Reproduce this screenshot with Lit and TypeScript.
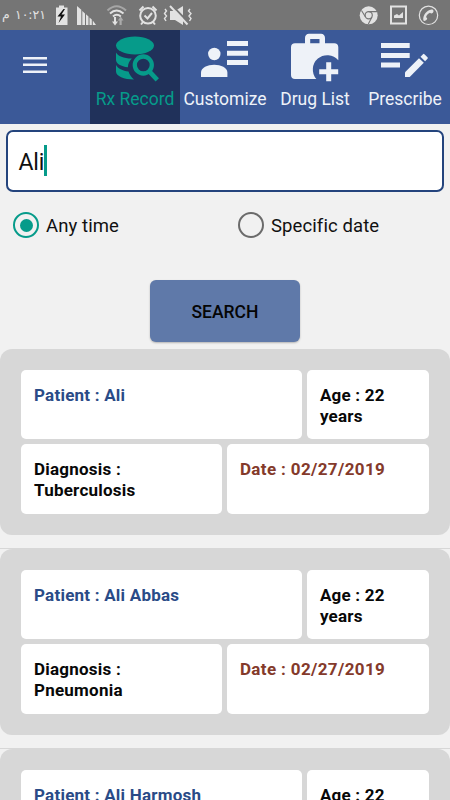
import { LitElement, html, svg, css } from "lit";
import { customElement, property } from "lit/decorators.js";

interface RxRecord {
  patient: string;
  age: string;
  diagnosis: string;
  date: string;
}

const RECORDS: RxRecord[] = [
  { patient: "Ali", age: "22 years", diagnosis: "Tuberculosis", date: "02/27/2019" },
  { patient: "Ali Abbas", age: "22 years", diagnosis: "Pneumonia", date: "02/27/2019" },
  { patient: "Ali Harmosh", age: "22 years", diagnosis: "", date: "" },
];

const recordIcon = svg`
  <ellipse cx="45" cy="15.500" rx="19" ry="9"/>
  <path d="M26 22.500C28 26 33.500 28.300 41.800 28.600C39.300 31 38 34 37.900 37.300C31 36.500 26 33.500 26 30Z"/>
  <path d="M26 35C28 38.500 32.500 40.800 38.500 41.500C39.500 44.700 41.300 47 44 49.500C34 49.500 26 46 26 41.500Z"/>
  <circle cx="53.300" cy="35" r="8.500" fill="none" stroke="currentColor" stroke-width="4.300"/>
  <path d="M59.500 41.700L67.300 49.800" fill="none" stroke="currentColor" stroke-width="4.600"/>`;

const customizeIcon = svg`
  <circle cx="34.300" cy="24" r="6.200"/>
  <path d="M21 47V42.500C21 37.500 27.500 34.700 34.200 34.700S47.400 37.500 47.400 42.500V47Z"/>
  <path d="M47 11H68V16H47ZM47 20.700H68V25.700H47ZM47 30H68V35H47Z"/>`;

const drugIcon = svg`
  <path fill-rule="evenodd" d="M25 13.300H35V8C35 5.500 36.500 3.800 39 3.800H51C53.500 3.800 55 5.500 55 8V13.300H64.300C66.800 13.300 68.300 14.800 68.300 17.300V30.200A13.800 13.800 0 0 0 46.300 49H25C22.500 49 21 47.500 21 45V17.300C21 14.800 22.500 13.300 25 13.300ZM40.200 9V13.300H49.500V9Z"/>
  <path d="M56.200 32.300H61.200V39.300H68.200V44.200H61.200V51.200H56.200V44.200H49.200V39.300H56.200Z"/>`;

const prescribeIcon = svg`
  <path d="M21 13H49.700V18H21ZM21 23H49.700V28H21ZM21 32.500H40V37.500H21Z"/>
  <path d="M45 47V42.300L59 28.200L63.800 32.800L49.700 47Z"/>
  <path d="M60.500 26.700L63 24.200Q63.700 23.500 64.400 24.200L67.500 27.300Q68.200 28 67.500 28.700L65.100 31.200Z"/>`;

@customElement("status-bar")
export class StatusBar extends LitElement {
  static styles = css`
    :host {
      display: flex;
      justify-content: space-between;
      height: 30px;
      background: #757575;
      color: #e2e2e2;
    }
    .left, .right { display: flex; align-items: center; }
    .time {
      width: 46px;
      font: 12.500px/28px "DejaVu Sans", sans-serif;
      direction: rtl;
      text-align: right;
      white-space: nowrap;
      display: flex;
      justify-content: space-between;
      box-sizing: border-box;
      padding-left: 2px;
    }
    svg { display: block; }
  `;
  render() {
    return html`
      <div class="left">
        <span class="time"><span>١٠:٢١</span><span>م</span></span>
        <svg width="154" height="30" viewBox="46 0 154 30" fill="currentColor">
          <path d="M56 7.500H59V5.500H64V7.500H67.500V25H56Z"/>
          <path d="M63.500 9L57.500 16.500H61L58.500 23L65 14.500H61.500L65 9Z" fill="#111"/>
          <path d="M77 6L81.300 9.800V25H77ZM82.300 11L85 13.400V25H82.300ZM86 14.300L88.500 16.500V25H86ZM89.500 17.500L91.800 19.600V25H89.500ZM92.800 20.500L96 25H92.800Z"/>
          <g fill="none" stroke="currentColor" stroke-width="2">
            <path d="M107.500 10.500Q116.500 2 126 10.500" opacity=".45"/>
            <path d="M110 13.500Q116.500 7.500 123.500 13.500M113 16.500Q116.800 13 120.800 16.500"/>
          </g>
          <path d="M114 17H116V21.500H118L115 25.500L112 21.500H114Z"/>
          <path d="M119.500 25V20.500H117.800L120.700 16.500L123.500 20.500H121.700V25Z" opacity=".5"/>
          <g fill="none" stroke="currentColor" stroke-width="2">
            <circle cx="148" cy="15.800" r="7.800"/>
            <path d="M139.500 10.500L143.500 6.500M156.500 10.500L152.500 6.500M144.500 15.500L147.500 18.500L152 13M143 22L141 24.500M153 22L155 24.500"/>
          </g>
          <path d="M170 11H175L183 6V25L175 20H170Z"/>
          <path d="M171.500 5L188.500 22.500" stroke="#757575" stroke-width="2"/>
          <path d="M170 6L187.500 24.500" stroke="currentColor" stroke-width="2"/>
          <path d="M165 9L166.500 11L164.500 13.500L166.500 16L164.500 18.500L166 21M190 9L188.500 11L191 13.500L189 16L191 18.500L189.500 21" fill="none" stroke="currentColor" stroke-width="1.400"/>
        </svg>
      </div>
      <div class="right">
        <svg width="100" height="30" viewBox="350 0 100 30" fill="none" stroke="currentColor">
          <circle cx="368.700" cy="15.300" r="9" fill="currentColor" stroke="none"/>
          <circle cx="368.700" cy="15.300" r="3.600" stroke="#757575" stroke-width="1.200"/>
          <path d="M368.700 11.600H377M365.500 17L361.500 10.500M372 17L368.300 24" stroke="#757575" stroke-width="1.100"/>
          <path d="M391 6.500H406V23.500H391Z" stroke-width="2"/>
          <path d="M394 18V15.500L397 14L399 15.500L403 12V18Z" fill="currentColor" stroke="none"/>
          <circle cx="428.500" cy="15.300" r="9.200" stroke-width="1.200"/>
          <path d="M431.500 9.500C426.500 10.500 422.800 15 423.300 20.300C424 21.500 425.500 21.200 427 19.300C427.500 18.500 426.800 17.700 426 17.300C426.500 15 428 13.500 430 12.700C430.700 13.600 431.800 13.700 432.600 13C434.200 11.500 433.800 9.500 431.500 9.500Z" fill="currentColor" stroke="none"/>
        </svg>
      </div>`;
  }
}

@customElement("nav-bar")
export class NavBar extends LitElement {
  static styles = css`
    :host {
      display: grid;
      grid-template-columns: repeat(5, 90px);
      height: 93.500px;
      background: #3b5998;
      color: #eef2f8;
    }
    .tab { display: flex; flex-direction: column; align-items: center; }
    .active { background: #20315a; color: #069b8a; }
    .label { font-size: 17.500px; line-height: 24px; margin-top: 2px; white-space: nowrap; }
    .menu { padding-top: 27px; padding-right: 20px; }
    svg { display: block; fill: currentColor; }
  `;
  render() {
    const tab = (label: string, icon: unknown, active = false) => html`
      <div class="tab ${active ? "active" : ""}">
        <svg width="90" height="55" viewBox="0 0 90 55">${icon}</svg>
        <span class="label">${label}</span>
      </div>`;
    return html`
      <div class="tab menu">
        <svg width="24" height="18" viewBox="0 0 24 18">
          <path d="M0 0H24V2.500H0ZM0 6.600H24V9.100H0ZM0 13.500H24V16H0Z"/>
        </svg>
      </div>
      ${tab("Rx Record", recordIcon, true)}
      ${tab("Customize", customizeIcon)}
      ${tab("Drug List", drugIcon)}
      ${tab("Prescribe", prescribeIcon)}`;
  }
}

@customElement("record-card")
export class RecordCard extends LitElement {
  @property({ attribute: false }) record!: RxRecord;
  static styles = css`
    :host {
      display: flex;
      flex-direction: column;
      gap: 5px;
      box-sizing: border-box;
      height: 186px;
      padding: 21px 21.500px 21px 21px;
      border-radius: 12px;
      background: #d7d7d7;
    }
    .row { display: flex; gap: 5px; }
    .cell {
      box-sizing: border-box;
      height: 69.400px;
      padding: 14.500px 13px 0;
      border-radius: 5px;
      background: #fff;
      color: #080808;
      font-size: 17px;
      font-weight: 700;
      line-height: 21px;
      letter-spacing: 0.230px;
      flex: 1;
    }
    .patient { flex: 0 0 281.400px; color: #2a4b87; }
    .diagnosis { flex: 0 0 201.400px; padding-right: 60px; }
    .age { padding-right: 25px; padding-left: 12.500px; }
    .date { color: #843a2b; letter-spacing: 0.370px; padding-left: 12.500px; }
  `;
  render() {
    const r = this.record;
    return html`
      <div class="row">
        <div class="cell patient">${`Patient : ${r.patient}`}</div>
        <div class="cell age">${`Age : ${r.age}`}</div>
      </div>
      ${r.date
        ? html`<div class="row">
            <div class="cell diagnosis">${`Diagnosis : ${r.diagnosis}`}</div>
            <div class="cell date">${`Date : ${r.date}`}</div>
          </div>`
        : ""}`;
  }
}

@customElement("app-root")
export class AppRoot extends LitElement {
  static styles = css`
    :host {
      display: flex;
      flex-direction: column;
      width: 450px;
      height: 800px;
      overflow: hidden;
      background: #f1f1f1;
      color: #101010;
      font-family: Roboto, sans-serif;
    }
    status-bar, nav-bar, .field, .choices, .search { flex-shrink: 0; }
    .field {
      display: flex;
      align-items: center;
      box-sizing: border-box;
      height: 62px;
      margin: 6.500px 6.500px 0 6px;
      padding: 0 10.500px;
      border: 2px solid #24447d;
      border-radius: 7px;
      background: #fff;
      font-size: 23px;
    }
    .field span:first-child { padding-top: 2px; letter-spacing: -0.200px; }
    .caret { width: 2.500px; height: 31px; background: #069b8a; margin-bottom: 1px; }
    .choices { display: grid; grid-template-columns: 1fr 1fr; margin-top: 20px; }
    .choice { display: flex; align-items: center; gap: 7px; height: 26px; padding-left: 13px; font-size: 18.500px; letter-spacing: 0.100px; }
    .choice > span:last-child { padding-top: 1px; }
    .radio {
      display: grid;
      place-items: center;
      box-sizing: border-box;
      width: 26px;
      height: 26px;
      border: 2.500px solid #6b6b6b;
      border-radius: 50%;
    }
    .on { border-color: #069b8a; }
    .on::after { content: ""; width: 13px; height: 13px; border-radius: 50%; background: #069b8a; }
    .search {
      align-self: center;
      width: 150px;
      height: 62px;
      margin-top: 42px;
      padding: 2px 0 0;
      border: 0;
      border-radius: 6px;
      background: #5f79a9;
      box-shadow: 0 1px 2px rgba(0, 0, 0, 0.250);
      color: #050505;
      font: 500 17.500px Roboto, sans-serif;
    }
    .list { margin-top: 7px; }
    .item { height: 199px; border-bottom: 1px solid #d7d7d7; }
  `;
  render() {
    return html`
      <status-bar></status-bar>
      <nav-bar></nav-bar>
      <div class="field"><span>Ali</span><span class="caret"></span></div>
      <div class="choices">
        <div class="choice"><span class="radio on"></span><span>Any time</span></div>
        <div class="choice"><span class="radio"></span><span>Specific date</span></div>
      </div>
      <button class="search">SEARCH</button>
      <div class="list">
        ${RECORDS.map((r) => html`<div class="item"><record-card .record=${r}></record-card></div>`)}
      </div>`;
  }
}
